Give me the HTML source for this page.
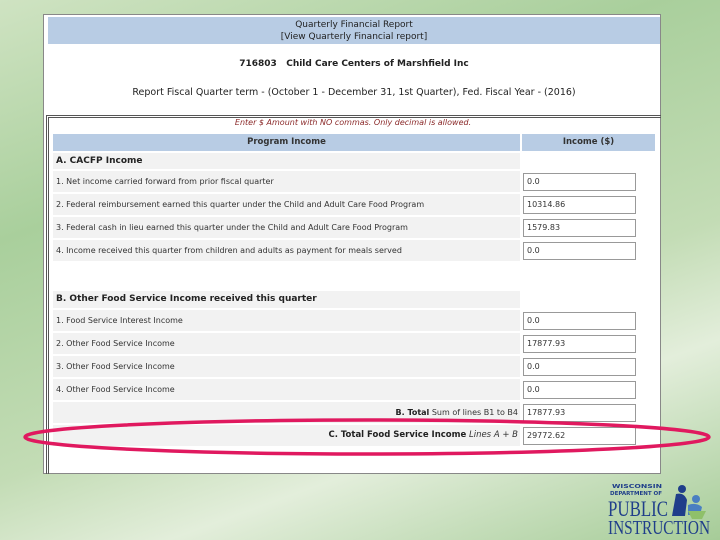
<!DOCTYPE html>
<html><head><style>
*{margin:0;padding:0;box-sizing:border-box}
body{width:720px;height:540px;overflow:hidden;position:relative;font-family:"DejaVu Sans","Liberation Sans",sans-serif;background:linear-gradient(160deg,#cfe3c2 0%,#a9cf9c 30%,#c3dcb5 60%,#e3eedb 75%,#a6cc98 100%)}
.a{position:absolute}
#shot{left:43px;top:14px;width:618px;height:460px;background:#fff;border:1px solid #888}
.t{font-size:9px;color:#222;white-space:nowrap}
.row{position:absolute;left:53px;width:467px;background:#f2f2f2;font-size:8px;color:#333;padding-left:3px;line-height:21px}
.inp{position:absolute;left:523px;width:113px;height:18px;border:1px solid #999;background:#fff;font-size:8px;color:#333;padding-left:3px;line-height:16px}
</style></head><body>
<div class="a" id="shot"></div>
<div class="a" style="left:48px;top:17px;width:612px;height:27px;background:#b8cce4"></div>
<div class="a t" style="left:48px;top:19px;width:612px;text-align:center;line-height:12px">Quarterly Financial Report<br>[View Quarterly Financial report]</div>
<div class="a t" style="left:48px;top:59px;width:612px;text-align:center;font-weight:bold;font-size:9px">716803&nbsp;&nbsp;&nbsp;Child Care Centers of Marshfield Inc</div>
<div class="a t" style="left:48px;top:87px;width:612px;text-align:center;font-size:9.5px">Report Fiscal Quarter term - (October 1 - December 31, 1st Quarter), Fed. Fiscal Year - (2016)</div>
<div class="a" style="left:46px;top:115px;width:615px;height:359px;border:3px double #555;border-right:none;border-bottom:none"></div>
<div class="a t" style="left:50px;top:118px;width:606px;text-align:center;font-style:italic;color:#8b2a2a;font-size:8px">Enter $ Amount with NO commas. Only decimal is allowed.</div>
<div class="a" style="left:53px;top:134px;width:467px;height:17px;background:#b8cce4;font-size:8.5px;text-align:center;line-height:17px;font-weight:bold;color:#333">Program Income</div>
<div class="a" style="left:522px;top:134px;width:133px;height:17px;background:#b8cce4;font-size:8.5px;text-align:center;line-height:17px;font-weight:bold;color:#333">Income ($)</div>
<div class="row" style="top:153px;line-height:16px;height:16px;font-weight:bold;font-size:9px;color:#222">A. CACFP Income</div>
<div class="row" style="top:171px;height:21px">1. Net income carried forward from prior fiscal quarter</div>
<div class="inp" style="top:173px">0.0</div>
<div class="row" style="top:194px;height:21px">2. Federal reimbursement earned this quarter under the Child and Adult Care Food Program</div>
<div class="inp" style="top:196px">10314.86</div>
<div class="row" style="top:217px;height:21px">3. Federal cash in lieu earned this quarter under the Child and Adult Care Food Program</div>
<div class="inp" style="top:219px">1579.83</div>
<div class="row" style="top:240px;height:21px">4. Income received this quarter from children and adults as payment for meals served</div>
<div class="inp" style="top:242px">0.0</div>
<div class="row" style="top:291px;height:17px;line-height:17px;font-weight:bold;font-size:9px;color:#222">B. Other Food Service Income received this quarter</div>
<div class="row" style="top:310px;height:21px">1. Food Service Interest Income</div>
<div class="inp" style="top:312px">0.0</div>
<div class="row" style="top:333px;height:21px">2. Other Food Service Income</div>
<div class="inp" style="top:335px">17877.93</div>
<div class="row" style="top:356px;height:21px">3. Other Food Service Income</div>
<div class="inp" style="top:358px">0.0</div>
<div class="row" style="top:379px;height:21px">4. Other Food Service Income</div>
<div class="inp" style="top:381px">0.0</div>
<div class="row" style="top:402px;height:21px;text-align:right;padding-right:2px"><b style="color:#222">B. Total</b> Sum of lines B1 to B4</div>
<div class="inp" style="top:404px">17877.93</div>
<div class="row" style="top:425px;height:21px;text-align:right;padding-right:2px;font-size:8.5px"><b style="color:#222">C. Total Food Service Income</b> <i>Lines A + B</i></div>
<div class="inp" style="top:427px">29772.62</div>
<svg class="a" style="left:0;top:0" width="720" height="540"><ellipse cx="367" cy="437" rx="342" ry="17" fill="none" stroke="#e0195f" stroke-width="3.5"/></svg>
<svg class="a" style="left:600px;top:478px" width="120" height="62">
<text x="12" y="10" font-size="5" font-weight="bold" fill="#1f3e8a" font-family="DejaVu Sans" textLength="50" lengthAdjust="spacingAndGlyphs">WISCONSIN</text>
<text x="10" y="17" font-size="5" font-weight="bold" fill="#1f3e8a" font-family="DejaVu Sans" textLength="52" lengthAdjust="spacingAndGlyphs">DEPARTMENT OF</text>
<text x="8" y="38" font-size="22" fill="#1f3e8a" font-family="Liberation Serif" textLength="60" lengthAdjust="spacingAndGlyphs">PUBLIC</text>
<text x="8" y="56" font-size="20" fill="#1f3e8a" font-family="Liberation Serif" textLength="102" lengthAdjust="spacingAndGlyphs">INSTRUCTION</text>
<circle cx="82" cy="11" r="4" fill="#1f3e8a"/><path d="M76 16 Q84 14 87 22 L85 38 L72 38 Z" fill="#1f3e8a"/>
<circle cx="96" cy="21" r="4" fill="#4a7fc1"/><path d="M88 27 Q96 24 102 29 L100 37 L88 37 Z" fill="#4a7fc1"/>
<path d="M88 33 L106 33 L102 41 L92 41 Z" fill="#8fc06a"/>
</svg>
</body></html>
